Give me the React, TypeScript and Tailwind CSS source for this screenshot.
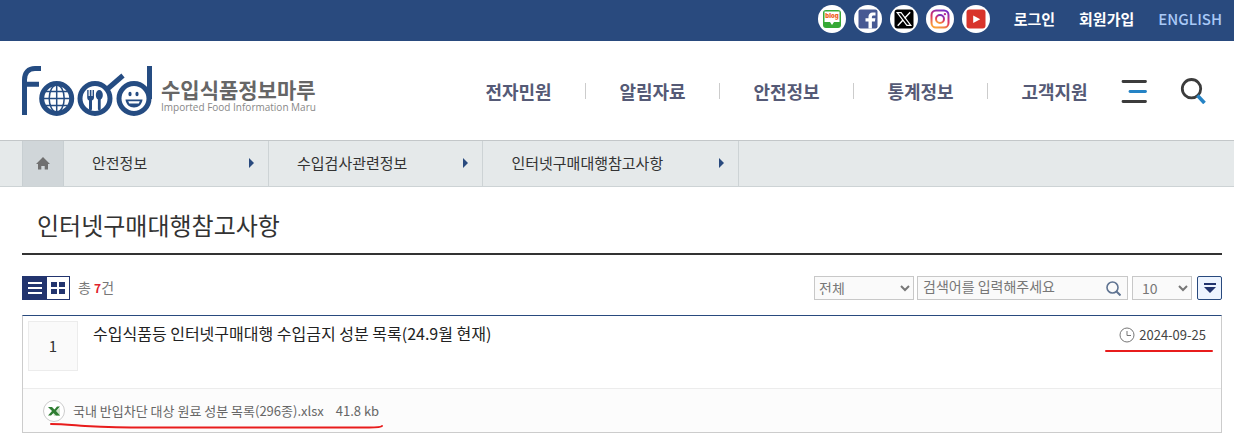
import { useState } from "react";

const menus = ["전자민원", "알림자료", "안전정보", "통계정보", "고객지원"];
const crumbs = ["안전정보", "수입검사관련정보", "인터넷구매대행참고사항"];

function SocialLinks() {
  const circle =
    "flex size-7 items-center justify-center rounded-full bg-white";

  return (
    <div className="flex items-center gap-2">
      <a href="#blog" aria-label="블로그" className={circle}>
        <svg width="20" height="20" viewBox="0 0 20 20">
          <rect x="1" y="1" width="18" height="18" rx="3" fill="#36a936" />
          <path d="M2.5 2.5h15v10.500h-5.500l-2 3-2-3H2.5z" fill="#fff" />
          <text
            x="10"
            y="9"
            textAnchor="middle"
            fontSize="6"
            fontWeight="900"
            fontFamily="Inter, sans-serif"
            fill="#f0641e"
          >
            blog
          </text>
        </svg>
      </a>
      <a href="#facebook" aria-label="페이스북" className={circle}>
        <svg width="20" height="20" viewBox="0 0 20 20">
          <rect x="0.5" y="0.5" width="19" height="19" rx="2" fill="#475993" />
          <path
            d="M10.5 19.5v-7H7.5V9.3h3V7.6c0-2.600 1.600-4.200 4.100-4.200h2.900v3h-1.900c-1.200 0-1.700.5-1.700 1.600v1.300h3.500l-.5 3.200h-3v7z"
            fill="#fff"
          />
        </svg>
      </a>
      <a href="#x" aria-label="X" className={circle}>
        <svg width="20" height="20" viewBox="0 0 20 20">
          <rect x="0.5" y="0.5" width="19" height="19" rx="3" fill="#000" />
          <path
            d="M3.2 3.6h3.900l9.700 12.800h-3.900z"
            fill="none"
            stroke="#fff"
            strokeWidth="1.2"
          />
          <path
            d="M16.2 3.2l-5.600 6.100M9 11l-5.300 5.800"
            stroke="#fff"
            strokeWidth="1.4"
          />
        </svg>
      </a>
      <a href="#instagram" aria-label="인스타그램" className={circle}>
        <svg width="20" height="20" viewBox="0 0 20 20">
          <defs>
            <linearGradient id="insta" x1="0.7" y1="0" x2="0.3" y2="1">
              <stop offset="0" stopColor="#7a2fc4" />
              <stop offset="0.5" stopColor="#dc3062" />
              <stop offset="1" stopColor="#fba338" />
            </linearGradient>
          </defs>
          <g fill="none" stroke="url(#insta)" strokeWidth="2">
            <rect x="1.5" y="1.5" width="17" height="17" rx="4.5" />
            <circle cx="10" cy="10" r="4" />
          </g>
          <circle cx="14.9" cy="5.1" r="1.2" fill="#b82c91" />
        </svg>
      </a>
      <a href="#youtube" aria-label="유튜브" className={circle}>
        <svg width="20" height="20" viewBox="0 0 20 20">
          <rect x="0.5" y="0.5" width="19" height="19" rx="3" fill="#d8342b" />
          <path d="M7.2 6.5l7 3.7-7 3.7z" fill="#fff" />
        </svg>
      </a>
    </div>
  );
}

function Logo() {
  return (
    <a href="#home" className="flex items-start gap-2 pt-0.5">
      <svg width="131" height="51" viewBox="0 0 131 51" aria-label="food">
        <g fill="none" stroke="#254c82" strokeWidth="5">
          <path d="M2.5 49V14C2.5 6.5 6.5 2.5 13 2.5h6M2.5 18.2H17" />
          <circle cx="34.7" cy="32.5" r="15" />
          <circle cx="73" cy="32.5" r="15" />
          <circle cx="112" cy="32.5" r="15" />
          <path d="M127.5 0v33" />
          <path d="M86 22.5L101 9.5" />
        </g>
        {/* 지구본 */}
        <g fill="none" stroke="#254c82" strokeWidth="1.5">
          <path d="M34.7 19v27M21 32.5h27M24 25.5h21.5M24 39.5h21.5" />
          <ellipse cx="34.7" cy="32.5" rx="7.5" ry="13.5" />
        </g>
        {/* 포크와 숟가락 */}
        <g fill="#254c82">
          <path d="M65.2 24h1.400v6h1.200v-6h1.600v6h1.200v-6H72v7.500c0 1.600-1 2.600-2 3V43a1.500 1.500 0 0 1-3 0v-8.500c-1-.4-1.800-1.400-1.800-3z" />
          <ellipse cx="77.3" cy="29" rx="3.5" ry="5" />
          <rect x="75.9" y="32" width="2.8" height="12.5" rx="1.4" />
        </g>
        {/* 웃는 얼굴 */}
        <g fill="#254c82">
          <ellipse cx="108" cy="28" rx="1.6" ry="2.3" />
          <ellipse cx="115" cy="28" rx="1.6" ry="2.3" />
          <path d="M103.5 33.500h17c-.5 5-4 8-8.500 8s-8-3-8.500-8z" />
          <path d="M106.2 35.200h11.600l-1 2.200h-9.600z" fill="#fff" />
        </g>
      </svg>
      <span className="flex flex-col pt-[11px]">
        <span className="text-[21px] leading-6 font-bold text-[#666]">
          수입식품정보마루
        </span>
        <span className="font-['Open_Sans',sans-serif] text-[10px] leading-3 font-medium text-[#888]">
          Imported Food Information Maru
        </span>
      </span>
    </a>
  );
}

function Header() {
  return (
    <header>
      <div className="flex h-[41px] items-center justify-end gap-6 bg-[#294a7e] pr-3 pb-1 text-[15px] leading-5 font-bold text-white">
        <SocialLinks />
        <a href="#login">로그인</a>
        <a href="#join">회원가입</a>
        <a href="#english" className="font-medium text-[#a9c9f7]">
          ENGLISH
        </a>
      </div>
      <div className="flex h-[99px] items-center justify-between pr-7 pl-[22px]">
        <Logo />
        <div className="flex items-center">
          <nav>
            <ul className="flex">
              {menus.map((menu) => (
                <li
                  key={menu}
                  className="flex h-4 w-[134px] items-center justify-center border-l border-[#ccc] first:border-transparent"
                >
                  <a
                    href="#menu"
                    className="text-lg leading-6 font-bold text-[#555a76]"
                  >
                    {menu}
                  </a>
                </li>
              ))}
            </ul>
          </nav>
          <button type="button" aria-label="전체메뉴">
            <svg width="26" height="26" viewBox="0 0 26 26" fill="none" strokeWidth="2.8" strokeLinecap="round">
              <path d="M2 3.500h22.500M2 23.500h22.500" stroke="#3c3c3c" />
              <path d="M9 13.500h15.500" stroke="#2583c5" />
            </svg>
          </button>
          <button type="button" aria-label="통합검색" className="ml-[33px]">
            <svg width="26" height="26" viewBox="0 0 26 26" fill="none">
              <circle cx="11.5" cy="10.7" r="9.2" stroke="#3c3c3c" strokeWidth="2.8" />
              <path d="M17.5 17.500l7 7.500" stroke="#2583c5" strokeWidth="3.6" />
            </svg>
          </button>
        </div>
      </div>
    </header>
  );
}

function Breadcrumb() {
  return (
    <nav className="flex h-[47px] border-t border-b border-t-[#c3c7c9] border-b-[#cdd3d5] bg-[#e5e9ea] pl-[22px]">
      <a
        href="#home"
        aria-label="홈"
        className="flex w-[42px] items-center justify-center border-x border-[#c8cfd2] bg-[#d0d6d9]"
      >
        <svg width="14" height="13" viewBox="0 0 14 13" fill="#707070">
          <path d="M7 0l7 7h-2v5.500H8.700V9H5.300v3.500H2V7H0z" />
        </svg>
      </a>
      {crumbs.map((crumb) => (
        <a
          key={crumb}
          href="#crumb"
          className="flex min-w-[205px] items-center justify-between gap-14 border-r border-[#cdd3d5] pr-3.5 pb-0.5 pl-7 text-[15px] leading-5 text-[#333]"
        >
          {crumb}
          <svg width="5" height="10" viewBox="0 0 5 10" fill="#294a7e">
            <path d="M0 0l5 5-5 5z" />
          </svg>
        </a>
      ))}
    </nav>
  );
}

function Toolbar() {
  const [keyword, setKeyword] = useState("");

  return (
    <div className="mt-[21px] flex items-center justify-between text-sm leading-5 text-[#777]">
      <div className="flex items-center">
        <div className="flex border border-[#22346e]">
          <button
            type="button"
            aria-label="목록형"
            className="flex h-[22px] w-6 items-center justify-center bg-[#22346e]"
          >
            <svg width="14" height="12" viewBox="0 0 14 12" fill="#fff">
              <path d="M0 0h14v2H0zM0 5h14v2H0zM0 10h14v2H0z" />
            </svg>
          </button>
          <button
            type="button"
            aria-label="카드형"
            className="flex h-[22px] w-[22px] items-center justify-center"
          >
            <svg width="14" height="12" viewBox="0 0 14 12" fill="#22346e">
              <path d="M0 0h6v5H0zM8 0h6v5H8zM0 7h6v5H0zM8 7h6v5H8z" />
            </svg>
          </button>
        </div>
        <p className="ml-2 pb-0.5">
          총 <strong className="text-xs text-[#e0222c]">7</strong>건
        </p>
      </div>

      <form className="flex items-center" onSubmit={(e) => e.preventDefault()}>
        <select
          aria-label="검색구분"
          className="h-6 w-[100px] border border-[#c8c8c8] bg-[#fafafa] pb-1"
        >
          <option>전체</option>
        </select>
        <div className="ml-[3px] flex h-6 w-[211px] items-center border border-[#c8c8c8] bg-[#fafafa]">
          <input
            type="text"
            aria-label="검색어"
            placeholder="검색어를 입력해주세요"
            value={keyword}
            onChange={(e) => setKeyword(e.target.value)}
            className="h-full min-w-0 flex-1 pb-1 pl-[5px] outline-none placeholder:text-[#777]"
          />
          <button type="submit" aria-label="검색" className="mr-1.5">
            <svg width="15" height="15" viewBox="0 0 15 15" fill="none" stroke="#5f7391" strokeWidth="1.6">
              <circle cx="6.5" cy="6.5" r="5.5" />
              <path d="M10.5 10.500l4 4" strokeWidth="2" />
            </svg>
          </button>
        </div>
        <select
          aria-label="목록 개수"
          className="ml-1 h-6 w-[60px] border border-[#c8c8c8] bg-[#fafafa] pb-1 pl-[5px]"
        >
          <option>10</option>
        </select>
        <button
          type="button"
          aria-label="적용"
          className="ml-[5px] flex h-6 w-[25px] items-center justify-center rounded-xs border border-[#294a7e] bg-[#edf4ff]"
        >
          <svg width="12" height="10" viewBox="0 0 12 10" fill="#22346e">
            <path d="M0 0h12v2H0zM0 4h12L6 10z" />
          </svg>
        </button>
      </form>
    </div>
  );
}

export default function App() {
  return (
    <div className="min-h-screen bg-white pb-[9px] font-['Noto_Sans_CJK_KR',sans-serif]">
      <Header />
      <Breadcrumb />

      <main className="pr-3 pl-[22px]">
        <h1 className="border-b-2 border-[#333] px-[15px] pt-5 pb-2.5 text-2xl leading-9 text-[#333]">
          인터넷구매대행참고사항
        </h1>

        <Toolbar />

        <ul className="mt-[15px] border border-[#ccc] border-t-[#294a7e]">
          <li>
            <div className="flex h-[72px] items-start justify-between pt-[5px] pr-[15px] pl-[5px]">
              <div className="flex items-start">
                <span className="flex size-[50px] items-center justify-center border border-[#ececec] bg-[#fafafa] text-[15px] leading-5 text-[#333]">
                  1
                </span>
                <a href="#detail" className="ml-[15px] text-base leading-6 text-[#222]">
                  수입식품등 인터넷구매대행 수입금지 성분 목록(24.9월 현재)
                </a>
              </div>
              {/* 등록일 */}
              <div className="relative flex items-center gap-1 pt-1 text-[13px] leading-5 text-[#444]">
                <svg width="16" height="16" viewBox="0 0 16 16" fill="none" stroke="#777">
                  <circle cx="8" cy="8" r="7" />
                  <path d="M8 4v4.500h4" />
                </svg>
                2024-09-25
                <svg
                  className="absolute top-7 -left-3.5"
                  width="108"
                  height="4"
                  viewBox="0 0 108 4"
                >
                  <path d="M1 2h106" stroke="#e81c1c" strokeWidth="2" strokeLinecap="round" />
                </svg>
              </div>
            </div>

            {/* 첨부파일 */}
            <div className="flex h-11 items-center border-t border-[#ececec] bg-[#fcfcfc] pl-5">
              <a
                href="#file"
                className="relative flex items-center text-[13px] leading-5 text-[#666]"
              >
                <svg width="22" height="22" viewBox="0 0 22 22">
                  <circle cx="11" cy="11" r="10.5" fill="#fff" stroke="#ccc" />
                  <path d="M10 13l7-5v8h-6z" fill="#cfe3cb" />
                  <path d="M5 7h4l2.500 2.500L14 6.500h3L13 11l4 4.500h-4L10.500 13 8 15.500H5L9 11z" fill="#2f7d32" />
                </svg>
                <span className="ml-2">국내 반입차단 대상 원료 성분 목록(296종).xlsx</span>
                <span className="ml-3">41.8 kb</span>
                <svg
                  className="absolute top-[22px] left-1.5"
                  width="336"
                  height="8"
                  viewBox="0 0 336 8"
                  fill="none"
                >
                  <path
                    d="M2 2c10 0 20 1 34 2 20 1 45 2 75 1.500H320c8 0 12 0 13-1.500"
                    stroke="#e81c1c"
                    strokeWidth="2"
                    strokeLinecap="round"
                  />
                </svg>
              </a>
            </div>
          </li>
        </ul>
      </main>
    </div>
  );
}
